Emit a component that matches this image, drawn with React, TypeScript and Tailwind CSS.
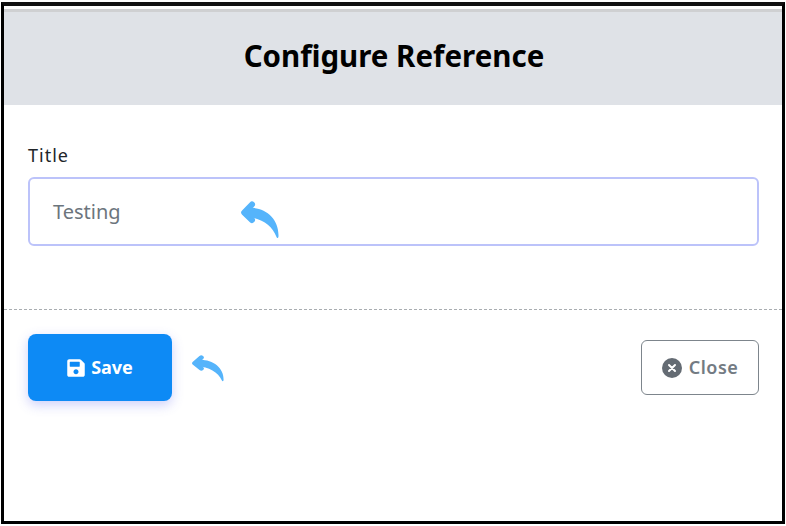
import { FaSave } from "react-icons/fa";

function ReplyArrow({ className }: { className: string }) {
  return (
    <svg viewBox="0 0 38 38" preserveAspectRatio="none" className={className} fill="#55b4fb">
      <path d="M11 3.5 L3.2 11.5 L11 19" fill="none" stroke="#55b4fb" strokeWidth="6" strokeLinecap="round" strokeLinejoin="round" />
      <path d="M6 7 C23 5 38 17 37.5 35 C37.5 37.5 36 37.5 35.5 36 C31 24 20 17 6 16 Z" />
    </svg>
  );
}

function CloseIcon() {
  return (
    <svg viewBox="0 0 20 20" className="h-[20px] w-[20px]">
      <circle cx="10" cy="10" r="10" fill="#646b73" />
      <path d="M7 7 L13 13 M13 7 L7 13" stroke="#fff" strokeWidth="2" strokeLinecap="round" />
    </svg>
  );
}

export default function App() {
  return (
    <div className="h-[526px] w-[786px] bg-white pt-[2px] pr-[1px] pb-[2px] pl-[1px] font-['Noto_Sans','Open_Sans',sans-serif]">
      <div className="flex h-full flex-col border-x-[3px] border-t-[4px] border-b-[3px] border-x-black border-t-[#111] border-b-black bg-white">
        <div className="mt-[3px] flex h-[96px] items-center justify-center border-t-[3px] border-[#cfd0d2] bg-[#dfe2e7] pb-[6px] pl-[2px]">
          <h1 className="text-[29.5px] font-bold leading-none text-black">Configure Reference</h1>
        </div>

        <div className="flex h-[205px] flex-col border-b border-dashed border-[#a9adb1] pt-[38px] pr-[23px] pl-[24px]">
          <label className="text-[18px] leading-[24px] tracking-[1px] text-[#212529]">Title</label>
          <div className="relative mt-[10px] flex h-[69px] items-center rounded-[6px] border-2 border-[#bcc3fa] pl-[23px] text-[20px] text-[#6c757d]">
            Testing
            <ReplyArrow className="absolute top-[22px] left-[211px] h-[38px] w-[38px]" />
          </div>
        </div>

        <div className="flex items-center justify-between pt-[24px] pr-[23px] pl-[24px]">
          <div className="flex items-center gap-[20px]">
            <button className="flex h-[67px] w-[144px] items-center justify-center gap-[6px] rounded-[8px] bg-[#0d8af5] text-[18px] font-bold text-white shadow-[0_4px_12px_rgba(90,100,240,0.3)]">
              <FaSave className="h-[20px] w-[18px]" />
              Save
            </button>
            <ReplyArrow className="mt-[2px] h-[27px] w-[32px]" />
          </div>
          <button className="flex h-[55px] w-[118px] items-center justify-center gap-[7px] rounded-[6px] border border-[#7d858c] text-[18px] font-semibold tracking-[0.5px] text-[#737b83]">
            <CloseIcon />
            Close
          </button>
        </div>
      </div>
    </div>
  );
}
